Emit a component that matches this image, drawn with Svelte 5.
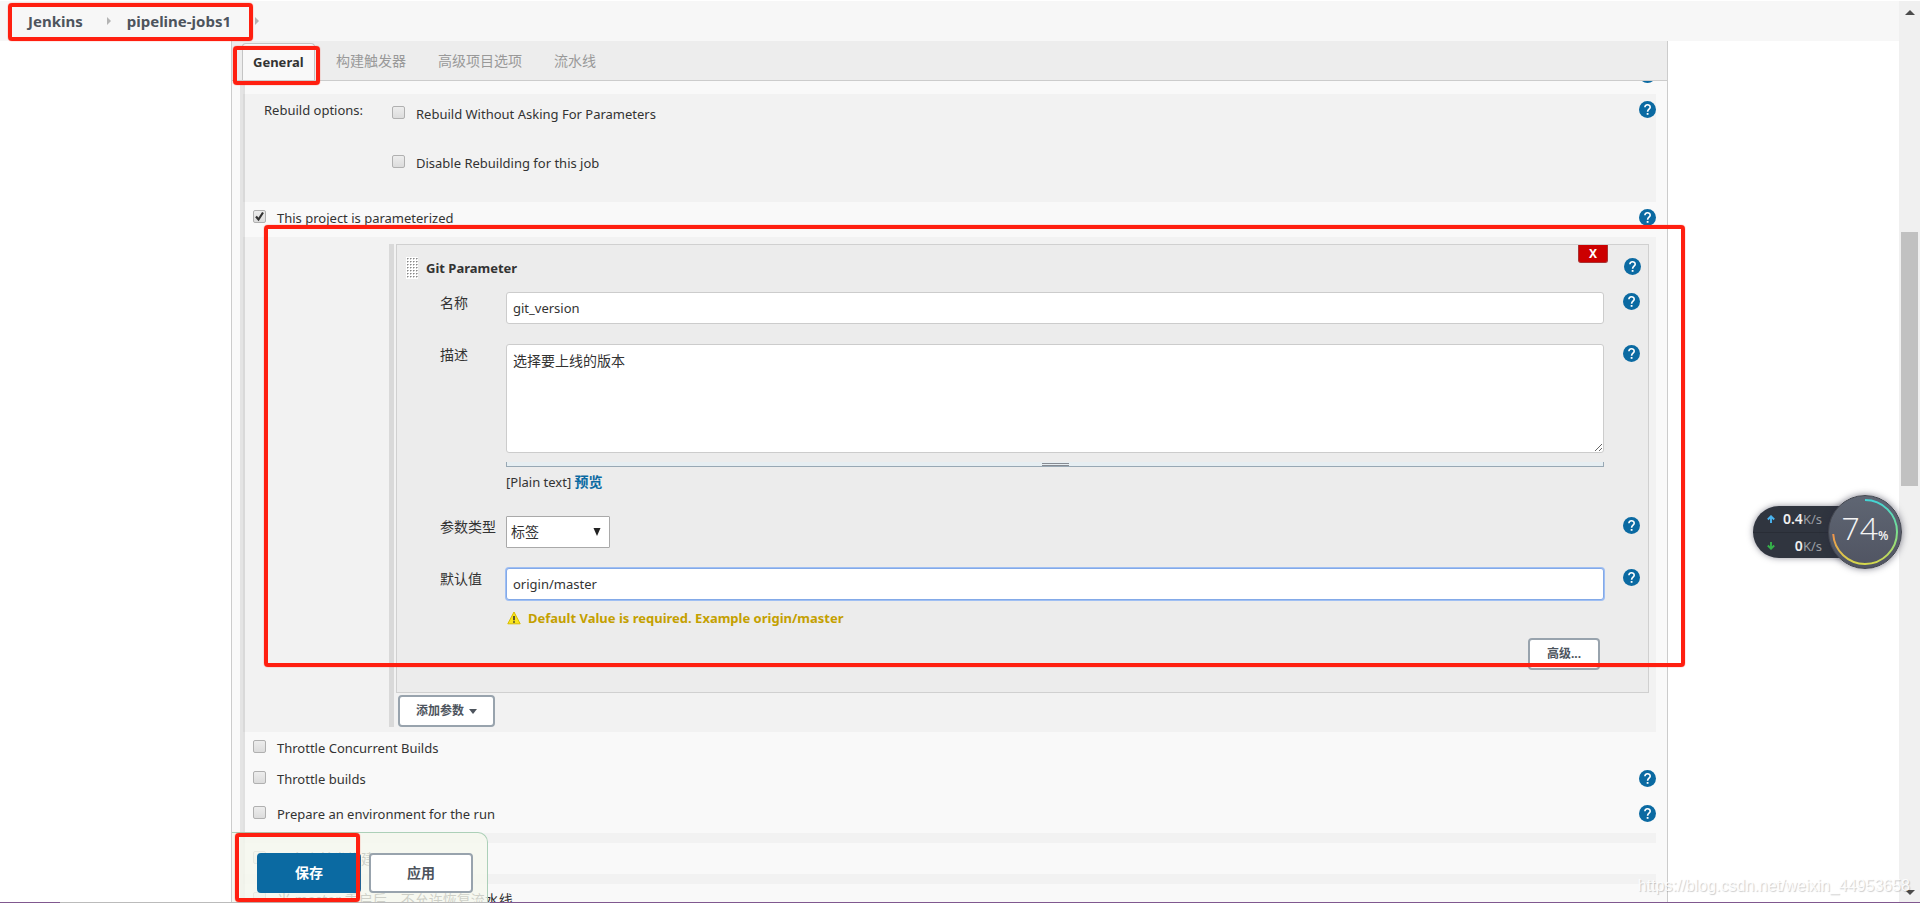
<script>
  let rebuildWithoutAsking = $state(false);
  let disableRebuild = $state(false);
  let parameterized = $state(true);
  let name = $state('git_version');
  let description = $state('选择要上线的版本');
  let kind = $state('标签');
  let defaultValue = $state('origin/master');
  const tabs = ['构建触发器', '高级项目选项', '流水线'];
</script>

{#snippet help()}
  <button class="help" type="button" aria-label="帮助">
    <svg viewBox="0 0 17 17" width="17" height="17">
      <circle cx="8.500" cy="8.500" r="8.500" fill="#0b6aa2" />
      <path d="M5.900 6.300C5.900 2.900 11.200 2.800 11.200 6.200C11.200 8.100 8.600 8.300 8.600 10.700" fill="none" stroke="#fff" stroke-width="1.600" />
      <rect x="7.700" y="12" width="1.800" height="1.800" fill="#fff" />
    </svg>
  </button>
{/snippet}

{#snippet crumbArrow()}
  <svg class="crumb-arrow" viewBox="0 0 4 8" width="4" height="8"><path d="M0 0L4 4L0 8Z" fill="#b4b4b4" /></svg>
{/snippet}

<div class="app">
  <div class="window">
    <div class="page">
      <header class="crumbs">
        <a href="#jenkins">Jenkins</a>
        {@render crumbArrow()}
        <a href="#job">pipeline-jobs1</a>
        {@render crumbArrow()}
        <span class="mark mark-crumbs"></span>
      </header>

      <main class="panel">
        <nav class="tabs">
          <a class="tab active" href="#general">General</a>
          {#each tabs as tab}
            <a class="tab" href="#{tab}">{tab}</a>
          {/each}
          <span class="mark mark-tab"></span>
        </nav>

        <form class="form" onsubmit={(e) => e.preventDefault()}>
          <div class="rows">
            <div class="row cut">{@render help()}</div>

            <div class="row shaded rebuild">
              <span class="row-title">Rebuild options:</span>
              <div class="stack">
                <label class="check"><input type="checkbox" bind:checked={rebuildWithoutAsking} />Rebuild Without Asking For Parameters</label>
                <label class="check"><input type="checkbox" bind:checked={disableRebuild} />Disable Rebuilding for this job</label>
              </div>
              {@render help()}
            </div>

            <div class="row option tall">
              <label class="check"><input type="checkbox" bind:checked={parameterized} />This project is parameterized</label>
              {@render help()}
            </div>

            <div class="row shaded params">
              <div class="params-inner">
                <section class="card">
                  <div class="card-head">
                    <svg class="grip" width="12" height="22" viewBox="0 0 12 22">
                      <defs>
                        <pattern id="dots" width="3" height="3" patternUnits="userSpaceOnUse">
                          <rect width="3" height="3" fill="#fff" /><rect x="1" y="1" width="1" height="1" fill="#888" /><rect x="2" y="1" width="1" height="1" fill="#bbb" /><rect x="1" y="2" width="1" height="1" fill="#ccc" />
                        </pattern>
                      </defs>
                      <rect width="12" height="22" fill="url(#dots)" />
                    </svg>
                    <b>Git Parameter</b>
                    <button class="remove" type="button">X</button>
                    {@render help()}
                  </div>

                  <div class="field">
                    <label for="name">名称</label>
                    <input id="name" type="text" bind:value={name} />
                    {@render help()}
                  </div>

                  <div class="field">
                    <label for="desc">描述</label>
                    <div class="control">
                      <textarea id="desc" bind:value={description}></textarea>
                      <div class="resizer"><i></i></div>
                      <div class="preview">[Plain text] <a href="#preview">预览</a></div>
                    </div>
                    {@render help()}
                  </div>

                  <div class="field">
                    <label for="kind">参数类型</label>
                    <div class="select">
                      <select id="kind" bind:value={kind}>
                        <option>标签</option>
                        <option>分支</option>
                      </select>
                      <svg width="8" height="8" viewBox="0 0 8 8"><path d="M0.500 0H7.500L4 8Z" fill="#222" /></svg>
                    </div>
                    {@render help()}
                  </div>

                  <div class="field last">
                    <label for="default">默认值</label>
                    <div class="control">
                      <input id="default" class="focused" type="text" bind:value={defaultValue} />
                      <div class="warning">
                        <svg width="14" height="14" viewBox="0 0 14 14">
                          <path d="M7 1L13.200 12.800H0.800Z" fill="#fbe61c" stroke="#d8bc00" stroke-linejoin="round" />
                          <path d="M7 5V9.300M7 10.200V11.700" stroke="#333" stroke-width="1.600" />
                        </svg>
                        Default Value is required. Example origin/master
                      </div>
                    </div>
                    {@render help()}
                  </div>

                  <div class="card-foot"><button class="btn small advanced" type="button">高级...</button></div>
                </section>

                <button class="btn small add" type="button">
                  添加参数
                  <svg width="8" height="5" viewBox="0 0 8 5"><path d="M0 0H8L4 5Z" fill="#4d545d" /></svg>
                </button>
              </div>
              <span class="mark mark-params"></span>
            </div>

            <div class="row option">
              <label class="check"><input type="checkbox" />Throttle Concurrent Builds</label>
            </div>
            <div class="row option tall">
              <label class="check"><input type="checkbox" />Throttle builds</label>
              {@render help()}
            </div>
            <div class="row option tall">
              <label class="check"><input type="checkbox" />Prepare an environment for the run</label>
              {@render help()}
            </div>
            <div class="row shaded spacer"></div>
            <div class="row option">
              <label class="check cjk"><input type="checkbox" />不允许并发构建</label>
            </div>
            <div class="row shaded spacer"></div>
            <div class="row option">
              <label class="check cjk"><input type="checkbox" />当 master 重启后，不允许恢复流水线</label>
            </div>
          </div>
        </form>

        <div class="actions">
          <button class="btn primary" type="button">保存</button>
          <button class="btn" type="button">应用</button>
          <span class="mark mark-save"></span>
        </div>
      </main>
    </div>

    <div class="scrollbar">
      <svg width="10" height="5" viewBox="0 0 10 5"><path d="M5 0L10 5H0Z" fill="#4b4b4b" /></svg>
      <div class="track"><div class="thumb"></div></div>
      <svg width="10" height="5" viewBox="0 0 10 5"><path d="M0 0H10L5 5Z" fill="#4b4b4b" /></svg>
    </div>
  </div>
  <div class="edge"></div>

  <div class="speed">
    <div class="rates">
      <div class="rate">
        <svg width="8" height="8" viewBox="0 0 8 8"><path d="M4 8V1.500M0.800 4.500L4 1.300L7.200 4.500" fill="none" stroke="#4ab4f0" stroke-width="1.900" /></svg>
        <span><b>0.4</b>K/s</span>
      </div>
      <div class="rate">
        <svg width="8" height="8" viewBox="0 0 8 8"><path d="M4 0V6.500M0.800 3.500L4 6.700L7.200 3.500" fill="none" stroke="#35b24a" stroke-width="1.900" /></svg>
        <span><b>0</b>K/s</span>
      </div>
    </div>
    <div class="gauge">
      <svg width="74" height="74" viewBox="0 0 74 74">
        <defs>
          <linearGradient id="right" x1="0" y1="0" x2="0" y2="1"><stop offset="0" stop-color="#43d4d6" /><stop offset="0.500" stop-color="#7be08e" /><stop offset="1" stop-color="#d5d84c" /></linearGradient>
          <linearGradient id="left" x1="0" y1="0" x2="0" y2="1"><stop offset="0" stop-color="#f0924a" /><stop offset="1" stop-color="#d5d84c" /></linearGradient>
        </defs>
        <path d="M37 5A32 32 0 0 1 37 69" fill="none" stroke="url(#right)" stroke-width="2" />
        <path d="M37 69A32 32 0 0 1 5.200 39" fill="none" stroke="url(#left)" stroke-width="2" />
      </svg>
      <span class="value">74<small>%</small></span>
    </div>
  </div>

  <div class="watermark">https://blog.csdn.net/weixin_44953658</div>
</div>

<style>
  :global(body) { background: #fff; }

  .app, .app * { box-sizing: border-box; }
  .app {
    position: relative;
    height: 100vh;
    overflow: hidden;
    display: flex;
    flex-direction: column;
    padding-top: 1px;
    color: #333;
    font: 13px/20px "Noto Sans", "Noto Sans CJK SC", sans-serif;
  }
  input, textarea, select, button { font: inherit; color: inherit; margin: 0; }
  a { color: inherit; text-decoration: none; }

  .window { flex: 1; min-height: 0; display: flex; }
  .edge { flex: none; height: 1px; background: linear-gradient(90deg, #80588f 60px, #bbb 60px 490px, #80588f 490px); }
  .page { flex: 1; min-width: 0; display: flex; flex-direction: column; }

  .crumbs {
    position: relative;
    flex: none;
    height: 40px;
    padding-left: 28px;
    display: flex;
    align-items: center;
    background: #f7f7f7;
    color: #4d545d;
    font-size: 15px;
    font-weight: 700;
  }
  .crumb-arrow { margin: 0 16px 0 24px; }

  .panel {
    position: relative;
    flex: 1;
    min-height: 0;
    margin: 0 231px;
    display: flex;
    flex-direction: column;
    border: solid #ccc;
    border-width: 0 1px;
    background: #f9f9f9;
  }
  .tabs {
    position: relative;
    flex: none;
    height: 40px;
    padding: 2px 0 0 10px;
    display: flex;
    background: #ededed;
    border-bottom: 1px solid #ccc;
    font-size: 14px;
  }
  .tab { padding: 8px 11px 0; margin-right: 10px; color: #999; }
  .tab.active {
    width: 73px;
    padding: 8px 0 0 10px;
    border: 1px solid #c4c4c4;
    border-bottom: 0;
    border-radius: 4px 4px 0 0;
    background: #f9f9f9;
    color: #333;
    font-size: 13px;
    font-weight: 700;
  }

  .form { flex: 1; min-height: 0; overflow-x: visible; overflow-y: clip; padding: 0 11px 0 8px; }
  .rows { border-left: 3px solid #e4e4e4; }
  .row { position: relative; display: flex; align-items: flex-start; border-left: 2px solid #e0e0e0; }
  .row.shaded { background: #f2f2f2; border-left-color: #d9d9d9; }
  .row > .help { margin-left: auto; }
  .cut { height: 13px; overflow: hidden; }
  .cut > .help { margin-top: -15px; }
  .rebuild { padding: 6px 0 29px 19px; }
  .row-title { width: 128px; }
  .stack { display: grid; gap: 29px; padding-top: 4px; }
  .option { padding: 6px 0 5px 8px; }
  .option.tall { padding-bottom: 9px; }
  .spacer { height: 10px; }

  .check { display: flex; align-items: flex-start; gap: 11px; }
  .check.cjk { font-size: 14px; }
  .check input {
    appearance: none;
    width: 13px;
    height: 13px;
    margin-top: 2px;
    border: 1px solid #b0b0b0;
    border-radius: 2px;
    background: linear-gradient(#ededed, #dcdcdc);
  }
  .check input:checked {
    background: url("data:image/svg+xml,%3Csvg xmlns='http://www.w3.org/2000/svg' viewBox='0 0 11 11'%3E%3Cpath d='M2 5.500L4.500 8.500L9 1.500' fill='none' stroke='%23333' stroke-width='2.200'/%3E%3C/svg%3E"), linear-gradient(#ededed, #dcdcdc);
  }

  .help { flex: none; width: 17px; height: 17px; margin-top: 1px; padding: 0; border: 0; background: none; }
  .help svg { display: block; }

  .params { padding: 7px 7px 5px 144px; }
  .params-inner { flex: 1; min-width: 0; border-left: 5px solid #d9d9d9; padding-left: 2px; }
  .card { border: 1px solid #d0d0d0; background: #ececec; padding-left: 43px; }
  .card-head { position: relative; display: flex; padding: 13px 7px 13px 0; }
  .card-head b { margin-left: 8px; }
  .card-head .help { margin-left: auto; margin-top: 0; }
  .grip { margin-left: -34px; margin-top: -1px; }
  .remove {
    position: absolute;
    top: 0;
    right: 40px;
    width: 30px;
    height: 18px;
    padding: 0;
    border: 1px solid #a33;
    border-top: 0;
    border-radius: 0 0 3px 3px;
    background: #c00;
    color: #fff;
    font-size: 12px;
    line-height: 18px;
    font-weight: 700;
  }
  .field { display: grid; grid-template-columns: 66px 1fr 44px; align-items: start; margin-bottom: 20px; }
  .field label { padding-top: 1px; font-size: 14px; white-space: nowrap; }
  .field .help { margin-left: 19px; }
  .field input, .field textarea {
    display: block;
    width: 100%;
    height: 32px;
    padding: 5px 6px;
    border: 1px solid #ccc;
    border-radius: 3px;
    background: #fff;
    outline: none;
  }
  .field textarea { height: 109px; padding: 6px; font-size: 14px; }
  .field input.focused { border-color: #83a9e8; box-shadow: 0 0 0 1px #9fbff3; }
  .resizer {
    height: 5px;
    margin-top: 9px;
    display: flex;
    justify-content: center;
    border: solid #98a8b4;
    border-width: 0 1px 1px;
    background: #e6eef2;
  }
  .resizer i { width: 27px; height: 3px; margin-top: 1px; border: solid #868a92; border-width: 1px 0; }
  .preview { padding: 5px 0 4px; }
  .preview a { color: #0b6aa2; font-size: 14px; font-weight: 700; }
  .select { position: relative; width: 104px; }
  .select select {
    appearance: none;
    width: 100%;
    height: 32px;
    padding: 0 4px;
    border: 1px solid #a9a9a9;
    border-radius: 1px;
    background: #fff;
    font-size: 14px;
  }
  .select svg { position: absolute; right: 9px; top: 12px; pointer-events: none; }
  .field.last { margin-bottom: 10px; }
  .warning { display: flex; align-items: center; gap: 7px; padding: 8px 0 0 1px; color: #c4a000; font-weight: 700; }
  .card-foot { display: flex; justify-content: flex-end; padding: 0 48px 22px 0; }

  .btn {
    width: 104px;
    height: 40px;
    border: 2px solid #98a3ad;
    border-radius: 4px;
    background: #fff;
    color: #4d545d;
    font-size: 14px;
    font-weight: 700;
  }
  .btn.primary { border-color: #0b6aa2; background: #0b6aa2; color: #fff; }
  .btn.small { height: 32px; padding: 0; font-size: 12px; }
  .advanced { width: 72px; }
  .btn.add { width: 97px; margin: 2px 0 0 2px; display: flex; align-items: center; justify-content: center; gap: 5px; }

  .actions {
    position: absolute;
    left: 0;
    bottom: 0;
    width: 256px;
    height: 70px;
    padding: 20px 0 0 25px;
    display: flex;
    gap: 8px;
    border: solid #acd0b8;
    border-width: 1px 1px 0 0;
    border-radius: 0 10px 0 0;
    background: rgba(245, 248, 238, 0.8);
  }

  .mark { position: absolute; border: 4px solid #ff1f10; border-radius: 4px; box-shadow: 0 0 1px #ff1f10; pointer-events: none; z-index: 2; }
  .mark-crumbs { left: 8px; top: 2px; width: 245px; height: 38px; }
  .mark-tab { left: 1px; top: 5px; width: 87px; height: 39px; }
  .mark-params { left: 19px; right: -29px; top: -12px; height: 442px; }
  .mark-save { left: 3px; top: 0; width: 125px; height: 69px; }

  .scrollbar {
    flex: none;
    width: 21px;
    padding: 9px 2px 7px;
    display: flex;
    flex-direction: column;
    align-items: center;
    background: #f0f0f0;
  }
  .track { flex: 1; width: 17px; }
  .thumb { height: 29%; margin-top: 217px; background: #c1c1c1; }

  .speed { position: absolute; right: 18px; top: 495px; display: flex; align-items: center; z-index: 3; }
  .rates {
    width: 112px;
    height: 52px;
    margin-right: -37px;
    border-radius: 26px 0 0 26px;
    background: #30353f;
    box-shadow: 0 0 6px rgba(40, 40, 60, 0.5);
    color: #9a9da3;
    font-size: 13px;
  }
  .rate { height: 26px; padding: 0 43px 0 14px; display: flex; align-items: center; justify-content: space-between; }
  .rate + .rate { border-top: 1px solid #292d36; }
  .rate b { color: #f0f0f0; font-size: 14px; font-weight: 600; }
  .gauge {
    position: relative;
    width: 74px;
    height: 74px;
    border: 1px solid #43464f;
    border-radius: 50%;
    background: linear-gradient(#5f6673, #505462);
    box-shadow: 0 0 7px rgba(40, 40, 60, 0.6);
    display: grid;
    place-items: center;
  }
  .gauge svg { position: absolute; inset: -1px; }
  .value { color: #f4f4f4; font-family: "Open Sans", sans-serif; font-size: 32px; font-weight: 300; line-height: 40px; }
  .value small { font-size: 12px; font-weight: 600; }

  .watermark {
    position: absolute;
    right: 10px;
    bottom: 7px;
    color: rgba(255, 255, 255, 0.9);
    text-shadow: 1px 1px 1px rgba(0, 0, 0, 0.2);
    font: 16px/20px "Liberation Sans", Arial, sans-serif;
    pointer-events: none;
    z-index: 2;
  }
</style>
